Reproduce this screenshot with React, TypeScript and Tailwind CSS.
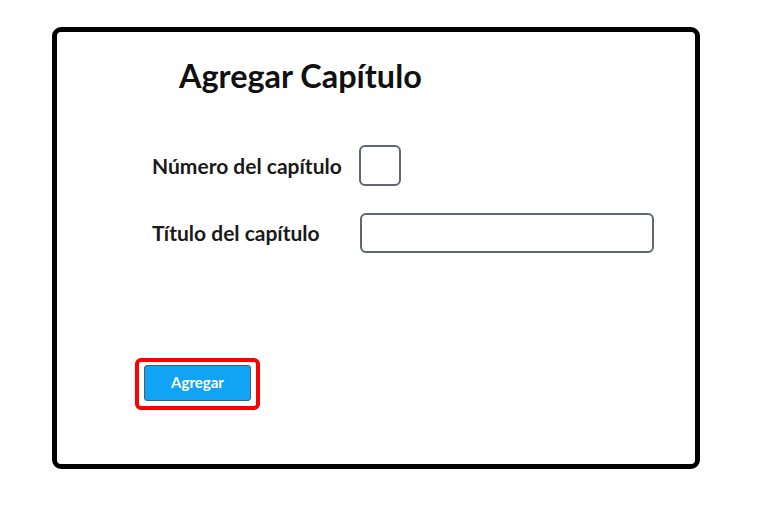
import React from "react";

export default function App() {
  return (
    <div
      className="w-[758px] h-[525px] bg-white pt-[27px] pl-[52px]"
      style={{ fontFamily: "Lato, 'Noto Sans', sans-serif" }}
    >
      <div className="w-[648px] h-[442px] border-[5px] border-black rounded-[9px] flex flex-col">
        <h1 className="mt-[25px] ml-[122px] text-[32.4px] font-bold leading-[1.2] text-[#111111]">
          Agregar Capítulo
        </h1>

        <div className="mt-[49px] ml-[95px] flex items-center h-[41px]">
          <label className="text-[21px] font-bold leading-[1.2] text-[#1a1a1a]">
            Número del capítulo
          </label>
          <input
            type="text"
            className="ml-[17px] w-[42px] h-[41px] border-2 border-[#5f6672] rounded-[6px] bg-white outline-none"
          />
        </div>

        <div className="mt-[27px] ml-[95px] flex items-center h-[40px]">
          <label className="text-[21px] font-bold leading-[1.2] text-[#1a1a1a]">
            Título del capítulo
          </label>
          <input
            type="text"
            className="ml-[40px] w-[294px] h-[40px] border-2 border-[#5f6672] rounded-[6px] bg-white outline-none"
          />
        </div>

        <div className="mt-[105px] ml-[78px] self-start border-4 border-[#ff0000] rounded-[6px] pt-[3px] pb-[5px] px-[5px]">
          <button className="w-[107px] h-[36px] bg-[#12a4f4] border border-[#4d5b6a] rounded-[3px] text-white text-[15px] font-bold leading-none">
            Agregar
          </button>
        </div>
      </div>
    </div>
  );
}
